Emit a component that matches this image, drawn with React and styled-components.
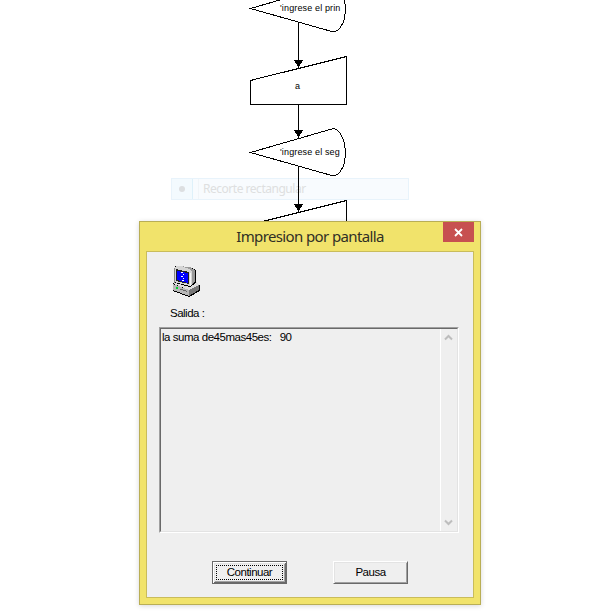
import React from "react";
import styled, { createGlobalStyle } from "styled-components";

const GlobalStyle = createGlobalStyle`
  body { margin: 0; background: #fff; overflow: hidden; }
  * { box-sizing: border-box; }
`;

const Canvas = styled.main`
  position: relative;
  width: 612px;
  height: 615px;
  background: #fff;
  overflow: hidden;
  font-family: "Liberation Sans", Arial, sans-serif;
  color: #000;
`;

const Chart = styled.svg`
  position: absolute;
  inset: 0;
  display: block;
`;

const NodeText = styled.span`
  position: absolute;
  left: ${(p) => p.$x}px;
  top: ${(p) => p.$y}px;
  font-size: 9px;
  line-height: 12px;
  letter-spacing: 0.14px;
  white-space: pre;
`;

const GhostMenu = styled.div`
  position: absolute;
  left: 171px;
  top: 178px;
  width: 238px;
  height: 22px;
  display: flex;
  align-items: center;
  background: #f8fbfe;
  border: 1px solid #e8f3fb;
  color: #dedfe0;
  font: 12px/20px "Noto Sans", "Open Sans", sans-serif;
`;

const GhostMark = styled.span`
  width: 21px;
  height: 20px;
  display: grid;
  place-items: center;
  border-right: 1px solid #def1fa;
  background: #f3fafe;
  &::before {
    content: "";
    width: 6px;
    height: 6px;
    border-radius: 50%;
    background: #dcdfe1;
  }
`;

const GhostLabel = styled.span`
  margin-left: 5px;
  padding-left: 4px;
  border-left: 1px solid #f1f5f8;
  letter-spacing: -0.48px;
  white-space: nowrap;
`;

const Dialog = styled.section`
  position: absolute;
  left: 139px;
  top: 221px;
  width: 342px;
  height: 384px;
  padding: 0 6px 6px;
  display: flex;
  flex-direction: column;
  background: #f1e36b;
  border: 1px solid #b9ae55;
  box-shadow: 0 1px 5px rgba(0, 0, 0, 0.16);
`;

const TitleBar = styled.header`
  height: 29px;
  flex: none;
  display: grid;
  grid-template-columns: 31px 1fr 31px;
  align-items: start;
`;

const Title = styled.h1`
  grid-column: 2;
  margin: 0;
  font: 400 15px/29px "Noto Sans", "Open Sans", sans-serif;
  letter-spacing: -0.62px;
  text-align: center;
  white-space: nowrap;
  color: #302f25;
`;

const CloseButton = styled.button`
  width: 31px;
  height: 20px;
  padding: 0;
  border: 0;
  display: grid;
  place-items: center;
  background: #c75050;
`;

const Client = styled.div`
  flex: 1;
  display: flex;
  flex-direction: column;
  padding: 13px 14px 0 12px;
  background: #efefef;
  border: 1px solid #c9bc5b;
`;

const ComputerIcon = styled.svg`
  display: block;
  flex: none;
  width: 32px;
  height: 34px;
  margin-left: 11px;
`;

const Label = styled.label`
  margin: 7px 0 0 11px;
  height: 14px;
  font-size: 11.5px;
  line-height: 14px;
  letter-spacing: -0.5px;
  white-space: nowrap;
`;

const Output = styled.div`
  flex: none;
  height: 206px;
  margin-top: 7px;
  display: flex;
  border: 1px solid;
  border-color: #a0a0a0 #fff #fff #a0a0a0;
`;

const OutputInner = styled.div`
  flex: 1;
  display: flex;
  border: 1px solid;
  border-color: #696969 #e3e3e3 #e3e3e3 #696969;
`;

const OutputText = styled.pre`
  flex: 1;
  margin: 0;
  padding: 1px 0 0 1px;
  font: 11.5px/14px "Liberation Sans", Arial, sans-serif;
  letter-spacing: -0.47px;
`;

const ScrollBar = styled.div`
  width: 17px;
  padding: 5px 1px 5px 0;
  display: flex;
  flex-direction: column;
  align-items: center;
  justify-content: space-between;
  border-left: 1px solid #fff;
`;

const Actions = styled.footer`
  display: flex;
  gap: 46px;
  margin: 28px 0 0 53px;
`;

const Bevel = styled.button`
  width: 75px;
  height: 23px;
  padding: ${(p) => (p.$focused ? "1px" : "0 0 1px")};
  display: flex;
  background: #efefef;
  border: 1px solid #696969;
  ${(p) => !p.$focused && "border-color: #fff #696969 #696969 #fff;"}
  box-shadow: ${(p) =>
    p.$focused
      ? "inset 1px 1px #fff, inset -1px -1px #696969, inset 2px 2px #e3e3e3, inset -2px -2px #a0a0a0"
      : "inset 1px 1px #e3e3e3, inset -1px -1px #a0a0a0"};
  color: #000;
  font: 11.5px/15px "Liberation Sans", Arial, sans-serif;
  letter-spacing: -0.5px;
`;

const BevelFace = styled.span`
  flex: 1;
  margin: ${(p) => (p.$focused ? "2px" : "3px")};
  height: 15px;
  line-height: ${(p) => (p.$focused ? "13px" : "15px")};
  border: ${(p) => (p.$focused ? "1px dotted #000" : "0")};
  text-align: center;
`;

function Arrow({ from, to }) {
  return (
    <g>
      <path d={`M298.5 ${from}V${to}`} />
      <path d={`M294 ${to - 8}h9l-4 7h-1z`} fill="#000" stroke="none" />
    </g>
  );
}

function OutputNode({ y }) {
  return <path d={`M250.5 ${y}L333.5 ${y - 24}Q338 ${y - 23} 341.5 ${y - 17}C346.5 ${y - 8} 346.5 ${y + 10} 341.5 ${y + 17}Q338 ${y + 23} 333.5 ${y + 23.5}Z`} />;
}

function InputNode({ y }) {
  return <path d={`M250.5 ${y + 24}L346.5 ${y}V${y + 48}H250.5Z`} />;
}

function Flowchart() {
  return (
    <>
      <Chart width="612" height="222" fill="none" stroke="#000" shapeRendering="crispEdges">
        <OutputNode y={8.5} />
        <InputNode y={56.5} />
        <OutputNode y={152.5} />
        <InputNode y={200.5} />
        <Arrow from={22} to={68} />
        <Arrow from={105} to={138} />
        <Arrow from={167} to={212} />
      </Chart>
      <NodeText $x={280} $y={2}>'ingrese el prin</NodeText>
      <NodeText $x={295} $y={80}>a</NodeText>
      <NodeText $x={280} $y={146}>'ingrese el seg</NodeText>
    </>
  );
}

function Computer() {
  return (
    <ComputerIcon viewBox="0 0 32 34" shapeRendering="crispEdges">
      <path d="M3 18l4-2 14 3 5-2 4 3v6l-11 6L3 26z" fill="#000" />
      <path d="M3 18l4-2 14 3 5-2 3 3-10 5L4 19z" fill="#dedede" />
      <path d="M3 19l16 6v6L3 25z" fill="#b8b8b8" />
      <path d="M19 25l10-5v5l-10 6z" fill="#777" />
      <path d="M6 22h2v2H6z" fill="#00d52b" />
      <path d="M10 24l7 2.5" fill="none" stroke="#666" />
      <path d="M5 1h8l2 1h5l6 3v13l-6 4L5 18z" fill="#000" />
      <path d="M6 1h6l3 1h5l5 3v12l-5 4-1-15L5 3z" fill="#999" />
      <path d="M5 2l2-1h5l9 4 1 2v13l-2 1L4 17z" fill="#d5d5d5" />
      <path d="M4 3h1v15H4z" fill="#888" />
      <path d="M20 8l1-1v14h-1z" fill="#f5f5f5" />
      <path d="M6 4l13 3v12L6 16z" fill="#222" />
      <path d="M7 6l11 2v10L7 15z" fill="#00f" />
      <path d="M11 7h2v1h-2zM13 9h1v1h-1zM11 11h2v1h-2zM13 13h1v1h-1zM12 15h2v1h-2z" fill="#fff" />
    </ComputerIcon>
  );
}

function Chevron({ down }) {
  return (
    <svg width="9" height="7" viewBox="0 0 9 7">
      <path d={down ? "M1 1.5l3.5 3.5L8 1.5" : "M1 5.5L4.5 2 8 5.5"} fill="none" stroke="#bdbdbd" strokeWidth="2" />
    </svg>
  );
}

export default function App() {
  return (
    <>
      <GlobalStyle />
      <Canvas>
        <GhostMenu>
          <GhostMark />
          <GhostLabel>Recorte rectangular</GhostLabel>
        </GhostMenu>
        <Flowchart />
        <Dialog>
          <TitleBar>
            <Title>Impresion por pantalla</Title>
            <CloseButton aria-label="Cerrar">
              <svg width="9" height="9" viewBox="0 0 9 9">
                <path d="M1 1l7 7M8 1L1 8" stroke="#fff" strokeWidth="1.8" />
              </svg>
            </CloseButton>
          </TitleBar>
          <Client>
            <Computer />
            <Label>Salida :</Label>
            <Output>
              <OutputInner>
                <OutputText>{"la suma de45mas45es:   90"}</OutputText>
                <ScrollBar>
                  <Chevron />
                  <Chevron down />
                </ScrollBar>
              </OutputInner>
            </Output>
            <Actions>
              <Bevel $focused><BevelFace $focused>Continuar</BevelFace></Bevel>
              <Bevel><BevelFace>Pausa</BevelFace></Bevel>
            </Actions>
          </Client>
        </Dialog>
      </Canvas>
    </>
  );
}
